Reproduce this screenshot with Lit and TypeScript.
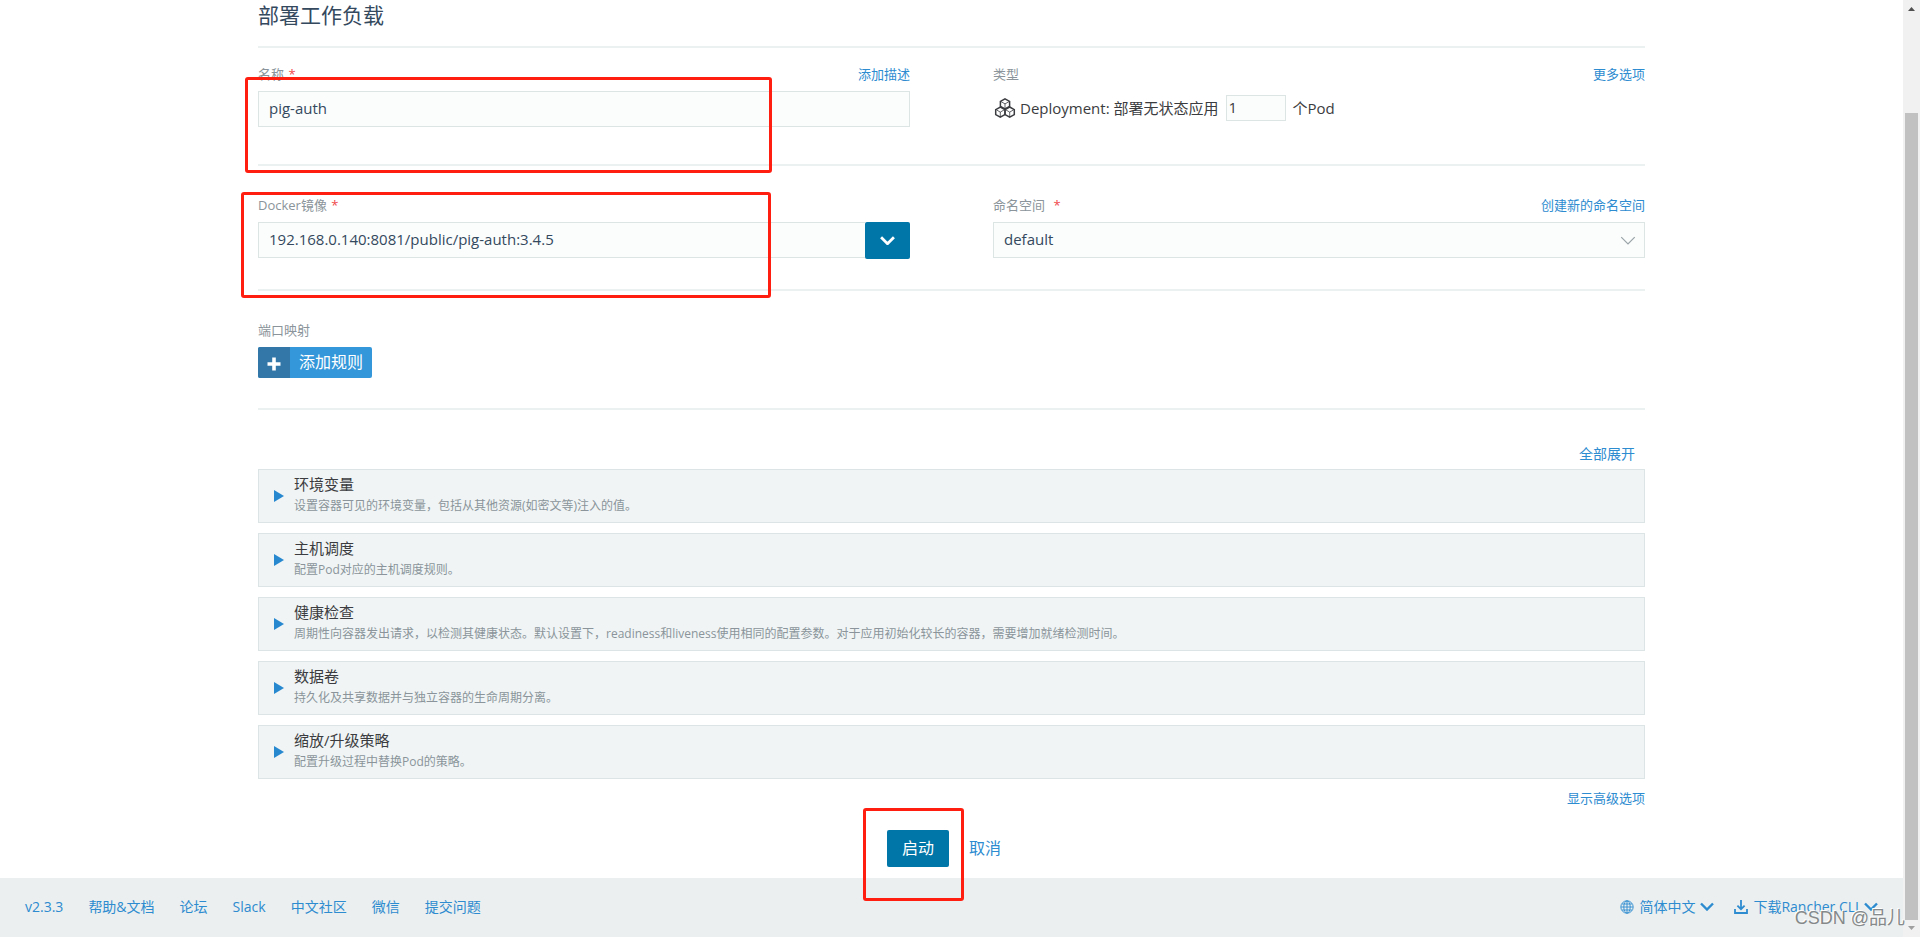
import { LitElement, html, css, svg } from "lit";
import { customElement } from "lit/decorators.js";

interface Section {
  title: string;
  detail: string;
}

const sections: Section[] = [
  { title: "环境变量", detail: "设置容器可见的环境变量，包括从其他资源(如密文等)注入的值。" },
  { title: "主机调度", detail: "配置Pod对应的主机调度规则。" },
  {
    title: "健康检查",
    detail:
      "周期性向容器发出请求，以检测其健康状态。默认设置下，readiness和liveness使用相同的配置参数。对于应用初始化较长的容器，需要增加就绪检测时间。",
  },
  { title: "数据卷", detail: "持久化及共享数据并与独立容器的生命周期分离。" },
  { title: "缩放/升级策略", detail: "配置升级过程中替换Pod的策略。" },
];

const footerLinks = ["v2.3.3", "帮助&文档", "论坛", "Slack", "中文社区", "微信", "提交问题"];

const chevron = (cls: string, width: string) => html`
  <svg class=${cls} viewBox="0 0 14 8" fill="none" stroke="currentColor" stroke-width=${width} aria-hidden="true">
    <path d="M1 1 L7 7 L13 1" />
  </svg>`;

const hexCell = (x: number, y: number) => svg`
  <path d="M${x} ${y - 5} l4.6 2.6 v5 l-4.6 2.6 l-4.6 -2.6 v-5 z" stroke-width="1.5" />
  <path d="M${x - 4} ${y - 2.2} l4 2.3 l4 -2.3 M${x} ${y} v5" stroke-width="0.8" />`;

@customElement("app-root")
export class AppRoot extends LitElement {
  static styles = css`
    :host {
      display: flex;
      min-height: 100vh;
      background: #fff;
      color: #3b3c40;
      font-family: "Open Sans", "Noto Sans CJK SC", sans-serif;
      font-weight: 400;
      font-size: 15px;
      line-height: 20px;
    }
    * {
      box-sizing: border-box;
    }
    a {
      color: #2d8bd0;
      text-decoration: none;
    }
    input,
    select,
    button {
      font: inherit;
      color: inherit;
      margin: 0;
    }
    .page {
      flex: 1;
      min-width: 0;
      display: flex;
      flex-direction: column;
      position: relative;
    }
    .content {
      width: 100%;
      max-width: 1387px;
      margin: 0 auto;
      flex: 1;
    }
    h1 {
      margin: 0;
      padding-bottom: 16px;
      font-size: 21px;
      line-height: 30px;
      font-weight: 400;
      color: #34495e;
      border-bottom: 2px solid #ebf0f0;
    }
    .row {
      position: relative;
      display: grid;
      grid-template-columns: 1fr 1fr;
      column-gap: 83px;
      border-bottom: 2px solid #ebf0f0;
    }
    .row.name {
      padding: 16px 0 37px;
    }
    .row.image {
      padding: 29px 0 31px;
    }
    .ports {
      padding: 29px 0 30px;
      border-bottom: 2px solid #ebf0f0;
    }
    .head {
      display: flex;
      justify-content: space-between;
      font-size: 13px;
      margin-bottom: 7px;
      color: #8a949a;
    }
    .required {
      color: #f0484a;
      margin-left: 1px;
    }
    .wide .required {
      margin-left: 5px;
    }
    .field {
      width: 100%;
      height: 36px;
      padding: 0 10px 2px;
      border: 1px solid #dce4e4;
      border-radius: 0;
      background: #fbfdfc;
      color: #34495e;
    }
    .combo {
      display: flex;
    }
    .combo .field {
      flex: 1;
      border-right: 0;
    }
    .drop {
      width: 45px;
      height: 37px;
      margin-bottom: -1px;
      padding: 0 0 4px;
      border: 0;
      border-radius: 2px;
      background: #0075a8;
      color: #fff;
    }
    .drop-icon {
      width: 15px;
      height: 9px;
    }
    .select {
      display: grid;
      align-items: center;
    }
    .select > * {
      grid-area: 1 / 1;
    }
    .select select {
      appearance: none;
    }
    .select-icon {
      justify-self: end;
      width: 16px;
      height: 9px;
      margin-right: 9px;
      color: #9aa4a8;
      pointer-events: none;
    }
    .kind {
      display: flex;
      align-items: center;
      height: 36px;
      padding-bottom: 2px;
      gap: 7px;
    }
    .kind-name {
      display: flex;
      align-items: center;
      gap: 3px;
    }
    .kind-icon {
      width: 24px;
      height: 24px;
      fill: none;
      stroke: #3b3c40;
    }
    .count {
      width: 60px;
      height: 26px;
      padding: 0 2px 2px;
      border: 1px solid #dce4e4;
      background: #fbfdfc;
    }
    .add {
      display: flex;
      height: 31px;
      padding: 0;
      border: 0;
      border-radius: 2px;
      overflow: hidden;
      background: #3497da;
      color: #fff;
      font-size: 16px;
      line-height: 31px;
    }
    .add-icon {
      width: 32px;
      height: 31px;
      background: #3277a8;
    }
    .add-text {
      padding: 0 9px;
    }
    .expand {
      display: flex;
      justify-content: flex-end;
      padding: 34px 10px 5px;
      font-size: 14px;
    }
    .cards {
      display: grid;
      gap: 10px;
    }
    .card {
      display: flex;
      align-items: center;
      width: 100%;
      height: 54px;
      padding: 0 15px;
      gap: 10px;
      border: 1px solid #dce4e6;
      background: #f0f4f5;
      text-align: left;
    }
    .arrow {
      flex: none;
      width: 10px;
      height: 12px;
      fill: #2788cf;
    }
    .card-title {
      display: block;
      line-height: 22px;
    }
    .card-detail {
      display: block;
      padding-bottom: 3px;
      font-size: 12px;
      line-height: 21px;
      color: #8a949a;
    }
    .advanced {
      display: flex;
      justify-content: flex-end;
      padding: 9px 0 22px;
      font-size: 13px;
    }
    .actions {
      display: flex;
      justify-content: center;
      align-items: center;
      gap: 5px;
      padding-bottom: 11px;
      font-size: 16px;
    }
    .launch {
      position: relative;
      display: flex;
    }
    .launch button {
      height: 37px;
      padding: 0 15px 2px;
      border: 0;
      border-radius: 2px;
      background: #0075a8;
      color: #fff;
    }
    .cancel {
      padding: 0 15px 2px;
    }
    .mark {
      position: absolute;
      border: 3px solid #ff1e10;
      border-radius: 3px;
      pointer-events: none;
      z-index: 1;
    }
    .mark.name-mark {
      inset: 29px 873px -9px -13px;
    }
    .mark.image-mark {
      inset: 26px 874px -9px -17px;
    }
    .mark.launch-mark {
      inset: -22px -15px -34px -24px;
    }
    footer {
      display: flex;
      justify-content: space-between;
      align-items: center;
      height: 59px;
      padding: 0 25px 2px;
      background: #ebefef;
      font-size: 14px;
    }
    .links {
      display: flex;
      gap: 25px;
    }
    .tools {
      display: flex;
      gap: 20px;
    }
    .tool {
      display: flex;
      align-items: center;
      gap: 5px;
    }
    .glyph {
      width: 14px;
      height: 14px;
    }
    .tool-chevron {
      width: 14px;
      height: 9px;
    }
    .watermark {
      position: absolute;
      right: -2px;
      bottom: 7px;
      z-index: 2;
      font-family: "Liberation Sans", "Noto Sans CJK SC", sans-serif;
      font-size: 18px;
      line-height: 24px;
      color: #85898a;
      text-shadow: -1px -1px 0 #fff;
      white-space: nowrap;
    }
    .scroll {
      display: flex;
      flex-direction: column;
      align-items: center;
      width: 17px;
      background: #f1f1f1;
    }
    .scroll svg {
      width: 17px;
      height: 17px;
    }
    .thumb {
      flex: 1;
      width: 13px;
      margin-top: 96px;
      background: #c1c1c1;
    }
  `;

  render() {
    return html`
      <div class="page">
        <main class="content">
          <h1>部署工作负载</h1>

          <section class="row name">
            <div>
              <div class="head">
                <label for="name">名称 <span class="required">*</span></label>
                <a href="#">添加描述</a>
              </div>
              <input id="name" class="field" type="text" value="pig-auth" />
            </div>
            <div>
              <div class="head">
                <label for="count">类型</label>
                <a href="#">更多选项</a>
              </div>
              <div class="kind">
                <span class="kind-name">
                  <svg class="kind-icon" viewBox="0 0 24 24" aria-hidden="true">
                    ${hexCell(12, 7.8)}${hexCell(7.3, 16)}${hexCell(16.7, 16)}
                  </svg>
                  <span>Deployment: 部署无状态应用</span>
                </span>
                <input id="count" class="count" type="text" value="1" />
                <span>个Pod</span>
              </div>
            </div>
            <div class="mark name-mark"></div>
          </section>

          <section class="row image">
            <div>
              <div class="head">
                <label for="image">Docker镜像 <span class="required">*</span></label>
              </div>
              <div class="combo">
                <input id="image" class="field" type="text" value="192.168.0.140:8081/public/pig-auth:3.4.5" />
                <button class="drop" type="button" aria-label="Docker镜像">${chevron("drop-icon", "2.6")}</button>
              </div>
            </div>
            <div>
              <div class="head wide">
                <label for="namespace">命名空间 <span class="required">*</span></label>
                <a href="#">创建新的命名空间</a>
              </div>
              <div class="select">
                <select id="namespace" class="field">
                  <option>default</option>
                </select>
                ${chevron("select-icon", "1.1")}
              </div>
            </div>
            <div class="mark image-mark"></div>
          </section>

          <section class="ports">
            <div class="head"><span>端口映射</span></div>
            <button class="add" type="button">
              <svg class="add-icon" viewBox="0 0 32 31" aria-hidden="true">
                <path d="M16 10.5 v13 M9.5 17 h13" stroke="#fff" stroke-width="3.6" />
              </svg>
              <span class="add-text">添加规则</span>
            </button>
          </section>

          <div class="expand"><a href="#">全部展开</a></div>
          <div class="cards">
            ${sections.map(
              (s) => html`
                <button class="card" type="button" aria-expanded="false">
                  <svg class="arrow" viewBox="0 0 10 12" aria-hidden="true"><path d="M0 0 L10 6 L0 12 z" /></svg>
                  <span>
                    <span class="card-title">${s.title}</span>
                    <span class="card-detail">${s.detail}</span>
                  </span>
                </button>
              `,
            )}
          </div>
          <div class="advanced"><a href="#">显示高级选项</a></div>

          <div class="actions">
            <div class="launch">
              <button type="button">启动</button>
              <div class="mark launch-mark"></div>
            </div>
            <a class="cancel" href="#">取消</a>
          </div>
        </main>

        <footer>
          <nav class="links">${footerLinks.map((t) => html`<a href="#">${t}</a>`)}</nav>
          <div class="tools">
            <a class="tool" href="#">
              <svg class="glyph" viewBox="0 0 14 14" fill="none" stroke="currentColor" stroke-width="0.9" aria-hidden="true">
                <circle cx="7" cy="7" r="6.2" />
                <path d="M7 1 v12 M1 7 h12 M2 4 h10 M2 10 h10" />
                <ellipse cx="7" cy="7" rx="3.2" ry="6.2" />
              </svg>
              简体中文 ${chevron("tool-chevron", "2.4")}
            </a>
            <a class="tool" href="#">
              <svg class="glyph" viewBox="0 0 14 14" fill="none" stroke="currentColor" stroke-width="1.8" aria-hidden="true">
                <path d="M7 0 v9 M3.4 5.6 L7 9.2 L10.6 5.6 M1 9 v4 h12 v-4" />
              </svg>
              下载Rancher CLI ${chevron("tool-chevron", "2.4")}
            </a>
          </div>
        </footer>
        <div class="watermark">CSDN @品儿</div>
      </div>

      <div class="scroll" aria-hidden="true">
        <svg viewBox="0 0 17 17"><path d="M5 11 L8.5 7 L12 11 z" fill="#505050" /></svg>
        <div class="thumb"></div>
        <svg viewBox="0 0 17 17"><path d="M5 6 L8.5 10 L12 6 z" fill="#a0a0a0" /></svg>
      </div>
    `;
  }
}
